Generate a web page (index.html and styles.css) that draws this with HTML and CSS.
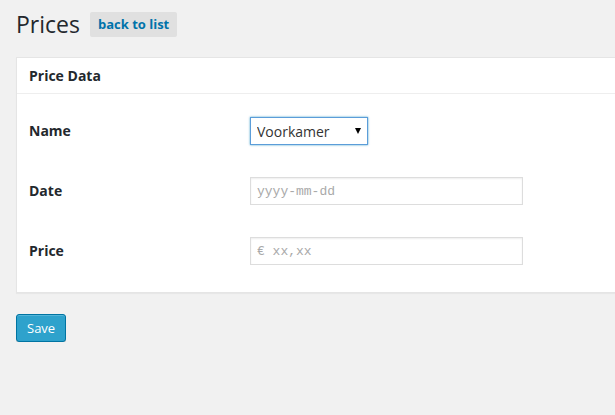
FILE: index.html
```html
<!DOCTYPE html>
<html>
<head>
<meta charset="utf-8">
<link rel="stylesheet" href="styles.css">
</head>
<body>
<div class="wrap">
  <div class="title-row">
    <h1 class="page-title">Prices</h1>
    <a class="title-action" href="#">back to list</a>
  </div>
  <div class="postbox">
    <h2 class="hndle">Price Data</h2>
    <div class="inside">
      <div class="form-row">
        <label class="form-label" for="name">Name</label>
        <span class="select-wrap">
          <select id="name" class="select"><option>Voorkamer</option></select>
        </span>
      </div>
      <div class="form-row">
        <label class="form-label" for="date">Date</label>
        <input id="date" class="text-input" type="text" placeholder="yyyy-mm-dd">
      </div>
      <div class="form-row">
        <label class="form-label" for="price">Price</label>
        <input id="price" class="text-input" type="text" placeholder="€ xx,xx">
      </div>
    </div>
  </div>
  <div class="submit-row">
    <button class="button-primary" type="button">Save</button>
  </div>
</div>
</body>
</html>
```
FILE: styles.css
```css
html, body {
  margin: 0;
  padding: 0;
  overflow: hidden;
}
body {
  background: #f1f1f1;
  font-family: "Open Sans", "Liberation Sans", sans-serif;
  color: #444;
  font-size: 13px;
  width: 615px;
  height: 415px;
}
.wrap {
  padding: 10px 0 0 16px;
  overflow: hidden;
}
.title-row {
  display: flex;
  align-items: flex-start;
  gap: 10px;
}
.page-title {
  margin: 0;
  font-size: 23px;
  font-weight: 400;
  line-height: 29px;
  color: #23282d;
}
.title-action {
  margin-top: 2px;
  padding: 4px 8px;
  background: #e0e0e0;
  border-radius: 2px;
  color: #0073aa;
  font-weight: 700;
  font-size: 13px;
  line-height: 17px;
  text-decoration: none;
}
.postbox {
  margin-top: 18px;
  margin-right: -20px;
  background: #fff;
  border: 1px solid #e5e5e5;
  box-shadow: 0 1px 1px rgba(0,0,0,.04);
}
.hndle {
  margin: 0;
  padding: 8px 12px;
  font-size: 14px;
  line-height: 19px;
  font-weight: 700;
  color: #23282d;
  border-bottom: 1px solid #eee;
}
.inside {
  padding: 7px 12px 11px;
}
.form-row {
  display: flex;
  align-items: center;
  height: 60px;
}
.form-label {
  width: 221px;
  flex: none;
  margin-top: -1px;
  font-size: 14px;
  font-weight: 700;
  color: #23282d;
}
.select-wrap {
  position: relative;
  display: inline-block;
}
.select-wrap::after {
  content: "";
  position: absolute;
  right: 7px;
  top: 11px;
  border-left: 3.5px solid transparent;
  border-right: 3.5px solid transparent;
  border-top: 6px solid #000;
  pointer-events: none;
}
.select {
  -webkit-appearance: none;
  appearance: none;
  box-sizing: border-box;
  width: 118px;
  height: 28px;
  margin: 0;
  padding: 0 6px;
  font-family: "Open Sans", "Liberation Sans", sans-serif;
  font-size: 14px;
  color: #333;
  background: #fff;
  border: 1px solid #5b9dd9;
  border-radius: 0;
  box-shadow: 0 0 2px rgba(30,140,190,.8);
  outline: none;
}
.text-input {
  box-sizing: border-box;
  width: 273px;
  height: 28px;
  margin: 0;
  padding: 0 6px;
  font-family: "Liberation Mono", "DejaVu Sans Mono", monospace;
  font-size: 13px;
  color: #333;
  background: #fff;
  border: 1px solid #ddd;
  border-radius: 0;
  box-shadow: inset 0 1px 2px rgba(0,0,0,.07);
  outline: none;
}
.text-input::placeholder {
  color: #a9a9a9;
}
.submit-row {
  margin-top: 21px;
}
.button-primary {
  box-sizing: border-box;
  height: 28px;
  margin: 0;
  padding: 0 10px 1px;
  font-family: "Open Sans", "Liberation Sans", sans-serif;
  font-size: 13px;
  line-height: 26px;
  color: #fff;
  background: #2ea2cc;
  border: 1px solid #0074a2;
  border-radius: 3px;
  box-shadow: inset 0 1px 0 rgba(120,200,230,.5), 0 1px 0 rgba(0,0,0,.15);
}
```
